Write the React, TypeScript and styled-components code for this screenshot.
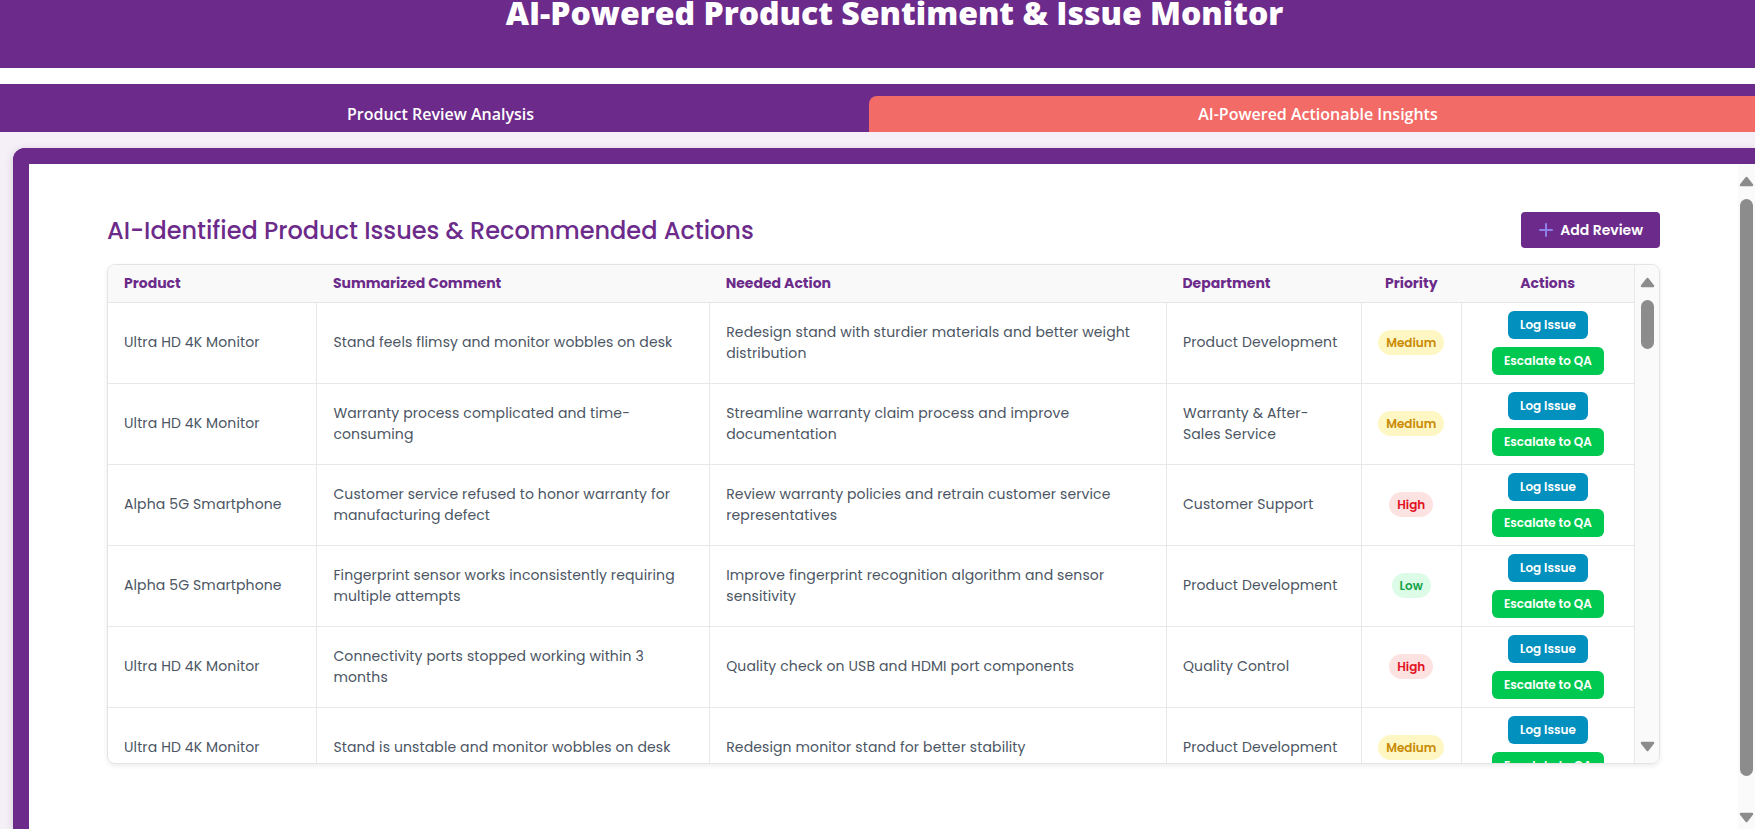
import React from "react";
import styled, { createGlobalStyle } from "styled-components";

const PURPLE = "#6c2b8a";
const CORAL = "#f26b67";
const BODY_FONT = `"Poppins", "Open Sans", sans-serif`;
const HEAD_FONT = `"Open Sans", "Noto Sans", sans-serif`;

const Global = createGlobalStyle`
  * { box-sizing: border-box; }
  html, body { margin: 0; padding: 0; height: 100%; overflow: hidden; }
  body { background: #f5f0f7; font-family: ${BODY_FONT}; }
  #root { height: 100%; }
`;

const Page = styled.div`
  height: 100vh;
  display: flex;
  flex-direction: column;
  overflow: hidden;
`;

const Header = styled.header`
  background: ${PURPLE};
  height: 68px;
  flex-shrink: 0;
  display: flex;
  justify-content: center;
  align-items: flex-start;
  padding-left: 34px;
`;

const Title = styled.h1`
  margin: -3px 0 0;
  font-family: ${HEAD_FONT};
  font-weight: 800;
  font-size: 32px;
  line-height: 32px;
  color: #fff;
`;

const Gap = styled.div`
  height: 16px;
  background: #fff;
  flex-shrink: 0;
`;

const TabBar = styled.nav`
  background: ${PURPLE};
  padding-top: 12px;
  display: flex;
  flex-shrink: 0;
`;

const Tab = styled.button<{ $active?: boolean }>`
  flex: ${(p) => (p.$active ? "1 1 auto" : "0 0 calc(50% - 8.5px)")};
  height: 36px;
  border: 0;
  margin: 0;
  padding: 0 0 0 12px;
  background: ${(p) => (p.$active ? CORAL : "transparent")};
  border-radius: ${(p) => (p.$active ? "8px 0 0 0" : "0")};
  color: #fff;
  font-family: ${HEAD_FONT};
  font-weight: 600;
  font-size: 16px;
  cursor: pointer;
`;

const Stage = styled.main`
  flex: 1;
  min-height: 0;
  padding: 16px 0 0 13px;
  display: flex;
`;

const Panel = styled.section`
  flex: 1;
  min-width: 0;
  border-top: 16px solid ${PURPLE};
  border-left: 16px solid ${PURPLE};
  border-radius: 12px 0 0 0;
  background: #fff;
  box-shadow: 0 2px 8px rgba(60, 20, 80, 0.18);
  display: flex;
`;

const Scroller = styled.div`
  flex: 1;
  min-width: 0;
  overflow-y: auto;
  scrollbar-width: none;
  padding: 48px 78px 110px;
  &::-webkit-scrollbar { display: none; }
`;

/* Scrollbar drawing (fake, since the capture hides native scrollbars) */
const Bar = styled.div<{ $w: number; $pb: number; $edge?: boolean }>`
  flex: 0 0 ${(p) => p.$w}px;
  display: flex;
  flex-direction: column;
  align-items: center;
  padding: 12px 0 ${(p) => p.$pb}px;
  background: #fafafa;
  border-left: ${(p) => (p.$edge ? "1px solid #e8e8e8" : "0")};
`;

const Track = styled.div`
  flex: 1;
  width: 100%;
  display: flex;
  flex-direction: column;
  align-items: center;
`;

const Thumb = styled.div<{ $top: number; $h: number }>`
  margin-top: ${(p) => p.$top}px;
  height: ${(p) => p.$h}px;
  width: 13px;
  border-radius: 7px;
  background: #8c8c8c;
`;

const Arrow = ({ down }: { down?: boolean }) => (
  <svg width="15" height="11" viewBox="0 0 15 11" aria-hidden style={{ flexShrink: 0 }}>
    <polygon
      points={down ? "2,2 13,2 7.5,9" : "2,9 13,9 7.5,2"}
      fill="#8c8c8c"
      stroke="#8c8c8c"
      strokeWidth="2.5"
      strokeLinejoin="round"
    />
  </svg>
);

const FakeScrollbar = ({
  width,
  bottomPad,
  thumbTop,
  thumbHeight,
  edge,
}: {
  width: number;
  bottomPad: number;
  thumbTop: number;
  thumbHeight: number;
  edge?: boolean;
}) => (
  <Bar $w={width} $pb={bottomPad} $edge={edge}>
    <Arrow />
    <Track>
      <Thumb $top={thumbTop} $h={thumbHeight} />
    </Track>
    <Arrow down />
  </Bar>
);

const TopRow = styled.div`
  display: flex;
  align-items: center;
  justify-content: space-between;
  margin-bottom: 16px;
`;

const Heading = styled.h2`
  margin: 0;
  font-family: ${BODY_FONT};
  font-weight: 500;
  font-size: 24px;
  color: ${PURPLE};
`;

const AddButton = styled.button`
  height: 36px;
  padding: 0 17px 0 18px;
  border: 0;
  border-radius: 4px;
  background: ${PURPLE};
  color: #fff;
  font-family: ${BODY_FONT};
  font-weight: 600;
  font-size: 14px;
  display: flex;
  align-items: center;
  gap: 7px;
  cursor: pointer;
`;

const TableWrap = styled.div`
  display: flex;
  height: 500px;
  overflow: hidden;
  border: 1px solid #e4e4e4;
  border-radius: 8px;
  box-shadow: 0 2px 5px rgba(0, 0, 0, 0.08);
`;

const TableScroll = styled.div`
  flex: 1;
  min-width: 0;
  overflow-y: auto;
  scrollbar-width: none;
  &::-webkit-scrollbar { display: none; }
`;

const Table = styled.table`
  width: 100%;
  border-collapse: collapse;
  table-layout: fixed;
  font-family: ${BODY_FONT};
`;

const Th = styled.th<{ $center?: boolean }>`
  position: sticky;
  top: 0;
  z-index: 1;
  height: 37px;
  padding: 0 16px;
  background: #f9f9f9;
  border-bottom: 1px solid #e6e6e6;
  text-align: ${(p) => (p.$center ? "center" : "left")};
  color: ${PURPLE};
  font-weight: 700;
  font-size: 14px;
`;

const Td = styled.td<{ $center?: boolean }>`
  padding: 8px 16px;
  border: 1px solid #e8e8e8;
  border-top: 0;
  vertical-align: middle;
  text-align: ${(p) => (p.$center ? "center" : "left")};
  color: #4b5563;
  font-size: 14px;
  letter-spacing: 0.12px;
  line-height: 21px;
  &:first-child { border-left: 0; }
  &:last-child { border-right: 0; }
`;

const badgeColors: Record<string, [string, string]> = {
  High: ["#fde2e2", "#e3121f"],
  Medium: ["#fef7c3", "#ca8a04"],
  Low: ["#dcfce7", "#16a34a"],
};

const Badge = styled.span<{ $level: string }>`
  display: inline-block;
  padding: 4px 8px;
  border-radius: 999px;
  font-size: 12px;
  line-height: 17px;
  letter-spacing: 0;
  font-weight: 600;
  background: ${(p) => badgeColors[p.$level][0]};
  color: ${(p) => badgeColors[p.$level][1]};
`;

const ActionStack = styled.div`
  display: flex;
  flex-direction: column;
  align-items: center;
  gap: 8px;
`;

const ActionBtn = styled.button<{ $kind: "log" | "qa" }>`
  height: 28px;
  padding: 0 12px;
  border: 0;
  border-radius: 6px;
  background: ${(p) => (p.$kind === "log" ? "#0290be" : "#00c951")};
  color: #fff;
  font-family: ${BODY_FONT};
  font-weight: 600;
  font-size: 12px;
  cursor: pointer;
`;

type Row = {
  product: string;
  comment: string;
  action: string;
  dept: string;
  priority: "High" | "Medium" | "Low";
};

const base: Row[] = [
  {
    product: "Ultra HD 4K Monitor",
    comment: "Stand feels flimsy and monitor wobbles on desk",
    action: "Redesign stand with sturdier materials and better weight distribution",
    dept: "Product Development",
    priority: "Medium",
  },
  {
    product: "Ultra HD 4K Monitor",
    comment: "Warranty process complicated and time-consuming",
    action: "Streamline warranty claim process and improve documentation",
    dept: "Warranty & After-Sales Service",
    priority: "Medium",
  },
  {
    product: "Alpha 5G Smartphone",
    comment: "Customer service refused to honor warranty for manufacturing defect",
    action: "Review warranty policies and retrain customer service representatives",
    dept: "Customer Support",
    priority: "High",
  },
  {
    product: "Alpha 5G Smartphone",
    comment: "Fingerprint sensor works inconsistently requiring multiple attempts",
    action: "Improve fingerprint recognition algorithm and sensor sensitivity",
    dept: "Product Development",
    priority: "Low",
  },
  {
    product: "Ultra HD 4K Monitor",
    comment: "Connectivity ports stopped working within 3 months",
    action: "Quality check on USB and HDMI port components",
    dept: "Quality Control",
    priority: "High",
  },
  {
    product: "Ultra HD 4K Monitor",
    comment: "Stand is unstable and monitor wobbles on desk",
    action: "Redesign monitor stand for better stability",
    dept: "Product Development",
    priority: "Medium",
  },
];

const rows: Row[] = Array.from({ length: 57 }, (_, i) => base[i % base.length]);

const PlusIcon = () => (
  <svg width="14" height="14" viewBox="0 0 14 14" aria-hidden>
    <path d="M7 1v12M1 7h12" stroke="#8f7fe8" strokeWidth="2" strokeLinecap="round" />
  </svg>
);

export default function App() {
  return (
    <Page>
      <Global />
      <Header>
        <Title>AI-Powered Product Sentiment &amp; Issue Monitor</Title>
      </Header>
      <Gap />
      <TabBar>
        <Tab>Product Review Analysis</Tab>
        <Tab $active>AI-Powered Actionable Insights</Tab>
      </TabBar>
      <Stage>
        <Panel>
          <Scroller>
            <TopRow>
              <Heading>AI-Identified Product Issues &amp; Recommended Actions</Heading>
              <AddButton>
                <PlusIcon />
                Add Review
              </AddButton>
            </TopRow>
            <TableWrap>
              <TableScroll>
                <Table>
                  <colgroup>
                    <col style={{ width: "13.69%" }} />
                    <col style={{ width: "25.74%" }} />
                    <col style={{ width: "29.93%" }} />
                    <col style={{ width: "12.77%" }} />
                    <col style={{ width: "6.55%" }} />
                    <col style={{ width: "11.32%" }} />
                  </colgroup>
                  <thead>
                    <tr>
                      <Th>Product</Th>
                      <Th>Summarized Comment</Th>
                      <Th>Needed Action</Th>
                      <Th>Department</Th>
                      <Th $center>Priority</Th>
                      <Th $center>Actions</Th>
                    </tr>
                  </thead>
                  <tbody>
                    {rows.map((r, i) => (
                      <tr key={i}>
                        <Td>{r.product}</Td>
                        <Td>{r.comment}</Td>
                        <Td>{r.action}</Td>
                        <Td>{r.dept}</Td>
                        <Td $center>
                          <Badge $level={r.priority}>{r.priority}</Badge>
                        </Td>
                        <Td $center>
                          <ActionStack>
                            <ActionBtn $kind="log">Log Issue</ActionBtn>
                            <ActionBtn $kind="qa">Escalate to QA</ActionBtn>
                          </ActionStack>
                        </Td>
                      </tr>
                    ))}
                  </tbody>
                </Table>
              </TableScroll>
              <FakeScrollbar width={25} bottomPad={11} thumbTop={12} thumbHeight={49} edge />
            </TableWrap>
          </Scroller>
          <FakeScrollbar width={17} bottomPad={6} thumbTop={12} thumbHeight={577} />
        </Panel>
      </Stage>
    </Page>
  );
}
